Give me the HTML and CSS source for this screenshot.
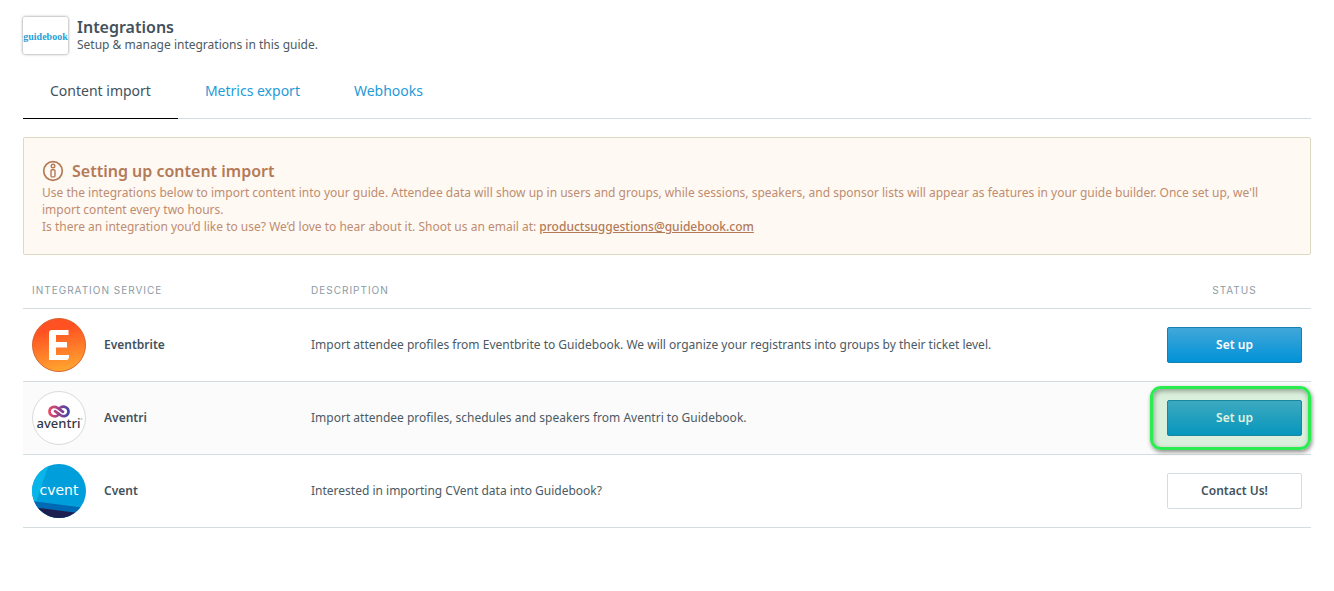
FILE: index.html
```html
<!DOCTYPE html>
<html lang="en">
<head>
<meta charset="utf-8">
<title>Integrations</title>
<link rel="stylesheet" href="styles.css">
</head>
<body>
<main class="page">
  <header class="header">
    <div class="guide-logo">
      <svg width="45" height="36" viewBox="0 0 45 36" role="img" aria-label="guidebook"><text class="guide-word" x="22.5" y="22" text-anchor="middle">guidebook</text></svg>
    </div>
    <div>
      <h1 class="title">Integrations</h1>
      <p class="subtitle">Setup &amp; manage integrations in this guide.</p>
    </div>
  </header>

  <nav class="tabs">
    <a class="tab tab-active" href="#import">Content import</a>
    <a class="tab" href="#metrics">Metrics export</a>
    <a class="tab" href="#webhooks">Webhooks</a>
  </nav>

  <section class="notice">
    <h2 class="notice-title">
      <svg class="notice-icon" width="22" height="22" viewBox="0 0 22 22" fill="none" stroke="currentColor" aria-hidden="true">
        <circle cx="11" cy="11" r="9.3" stroke-width="1.7"/>
        <circle cx="11" cy="6" r="1.8" stroke-width="1.4"/>
        <rect x="9" y="9.7" width="4" height="7.2" rx="1.2" stroke-width="1.4"/>
      </svg>
      Setting up content import
    </h2>
    <p class="notice-text">Use the integrations below to import content into your guide. Attendee data will show up in users and groups, while sessions, speakers, and sponsor lists will appear as features in your guide builder. Once set up, we'll import content every two hours.</p>
    <p class="notice-text">Is there an integration you’d like to use? We’d love to hear about it. Shoot us an email at: <a class="notice-link" href="mailto:productsuggestions@guidebook.com">productsuggestions@guidebook.com</a></p>
  </section>

  <table class="services">
    <thead>
      <tr><th class="col-service">INTEGRATION SERVICE</th><th>DESCRIPTION</th><th class="col-status">STATUS</th></tr>
    </thead>
    <tbody>
      <tr>
        <td><div class="service">
          <svg width="54" height="54" viewBox="0 0 54 54" aria-hidden="true">
            <defs><linearGradient id="eb" x1="0.4" y1="0" x2="0.6" y2="1"><stop offset="0.2" stop-color="#ff5122"/><stop offset="1" stop-color="#ffa830"/></linearGradient></defs>
            <circle cx="27" cy="27" r="26.5" fill="url(#eb)" stroke="#d9632f" stroke-width="1"/>
            <path d="M20 12H36.500V17H24V24H35V29.500H24V37H37V39Q37 42 34 42H17V15Q17 12 20 12Z" fill="#fff"/>
          </svg>
          <span>Eventbrite</span></div></td>
        <td>Import attendee profiles from Eventbrite to Guidebook. We will organize your registrants into groups by their ticket level.</td>
        <td><button class="btn btn-primary" type="button">Set up</button></td>
      </tr>
      <tr class="row-alt">
        <td><div class="service">
          <svg width="54" height="54" viewBox="0 0 54 54" aria-hidden="true">
            <defs><linearGradient id="av" x1="16" y1="0" x2="38" y2="0" gradientUnits="userSpaceOnUse"><stop offset="0" stop-color="#ef4d62"/><stop offset="0.5" stop-color="#96408c"/><stop offset="1" stop-color="#3448ad"/></linearGradient></defs>
            <circle cx="27" cy="27" r="26.500" fill="#fff" stroke="#d9dadd"/>
            <path d="M25.500 24.600C21.500 26.500 17.500 24.200 17.500 20.500C17.500 16.300 22 14.600 25.500 16.900L31 20.800M28.500 16.400C32.500 14.500 36.500 16.800 36.500 20.500C36.500 24.700 32 26.400 28.500 24.100L23 20.200" fill="none" stroke="url(#av)" stroke-width="2.700" stroke-linecap="round" stroke-linejoin="round"/>
            <text class="aventri-word" x="26.500" y="37" text-anchor="middle">aventri</text>
            <path d="M48.500 28H50.500" stroke="#777a88" stroke-width="0.700"/>
          </svg>
          <span>Aventri</span></div></td>
        <td>Import attendee profiles, schedules and speakers from Aventri to Guidebook.</td>
        <td><div class="spot"><button class="btn btn-primary" type="button">Set up</button></div></td>
      </tr>
      <tr>
        <td><div class="service">
          <svg width="54" height="54" viewBox="0 0 54 54" aria-hidden="true">
            <defs><clipPath id="cv"><circle cx="27" cy="27" r="27"/></clipPath></defs>
            <g clip-path="url(#cv)">
              <rect width="54" height="54" fill="#009fdb"/>
              <path d="M0 0H17L4 38H0Z" fill="#08b5e8"/>
              <path d="M0 37L54 44V54H0Z" fill="#0069b3"/>
              <path d="M0 43L54 50V54H0Z" fill="#1d1f50"/>
            </g>
            <text class="cvent-word" x="27" y="31" text-anchor="middle">cvent</text>
          </svg>
          <span>Cvent</span></div></td>
        <td>Interested in importing CVent data into Guidebook?</td>
        <td><button class="btn" type="button">Contact Us!</button></td>
      </tr>
    </tbody>
  </table>
</main>
</body>
</html>
```
FILE: styles.css
```css
* { box-sizing: border-box; }
body {
  margin: 0;
  background: #fff;
  color: #4b5a63;
  font: 12px/17px "Noto Sans", "Open Sans", sans-serif;
}
h1, h2, p { margin: 0; }
.page { padding: 17px 23px; }

.header { display: flex; gap: 9px; height: 47px; }
.guide-logo {
  width: 45px;
  height: 37px;
  flex: none;
  display: grid;
  place-items: center;
  background: #fff;
  border-radius: 2px;
  box-shadow: 0 0 3px rgba(0, 0, 0, 0.5);
}
.guide-word { font: bold 10px "Liberation Serif", serif; fill: #2a9fd8; }
.title { font-size: 16px; line-height: 21px; font-weight: 600; color: #42525c; }
.subtitle { line-height: 14px; }

.tabs { display: flex; border-bottom: 1px solid #d3dde0; }
.tab {
  padding: 17px 27px;
  margin-bottom: -1px;
  border-bottom: 1px solid transparent;
  font-size: 14px;
  line-height: 20px;
  color: #1f9bd7;
  text-decoration: none;
}
.tab-active { color: #42525c; border-bottom-color: #000; }

.notice {
  margin-top: 18px;
  padding: 20px 18px 19px;
  border: 1px solid #ddd9c3;
  border-radius: 2px;
  background: #fff9f3;
  color: #be8c70;
}
.notice-title {
  display: flex;
  align-items: center;
  gap: 8px;
  font-size: 16px;
  line-height: 26px;
  font-weight: 600;
  color: #b37a58;
}
.notice-icon { flex: none; }
.notice-link { color: #b37a58; font-weight: 500; }

.services { width: 100%; margin-top: 17px; border-collapse: collapse; }
.services th {
  height: 36px;
  padding: 1px 9px 0;
  font-family: Inter, "Noto Sans", sans-serif;
  font-size: 10px;
  font-weight: 400;
  letter-spacing: 1px;
  text-align: left;
  color: #8c9ba5;
}
.services tr { border-bottom: 1px solid #d3dde0; }
.services td { height: 73px; padding: 0 9px; }
.services .col-service { width: 279px; }
.services .col-status { width: 153px; text-align: center; }
.row-alt { background: #fbfbfb; }
.service { display: flex; align-items: center; gap: 18px; font-weight: 600; color: #42525c; }
.aventri-word { font: 500 13px "Noto Sans", sans-serif; fill: #343648; }
.cvent-word { font: 400 14px "DejaVu Sans", sans-serif; fill: #fff; }

.btn {
  display: block;
  width: 100%;
  height: 36px;
  border: 1px solid #d3dde0;
  border-radius: 2px;
  background: #fff;
  color: #42525c;
  font: 600 12px/17px "Noto Sans", "Open Sans", sans-serif;
}
.btn-primary {
  border-color: #1580b2;
  background: linear-gradient(#42a7da, #0092d7);
  color: #fff;
}
.spot { position: relative; }
.spot::after {
  content: "";
  position: absolute;
  inset: -14px -9px -14px -17px;
  border: 3px solid #29ed4e;
  border-radius: 11px;
  background: rgba(40, 180, 50, 0.15);
  box-shadow: 1px 2px 4px rgba(0, 0, 0, 0.45), inset 1px 2px 5px rgba(0, 0, 0, 0.35);
  pointer-events: none;
}
```
